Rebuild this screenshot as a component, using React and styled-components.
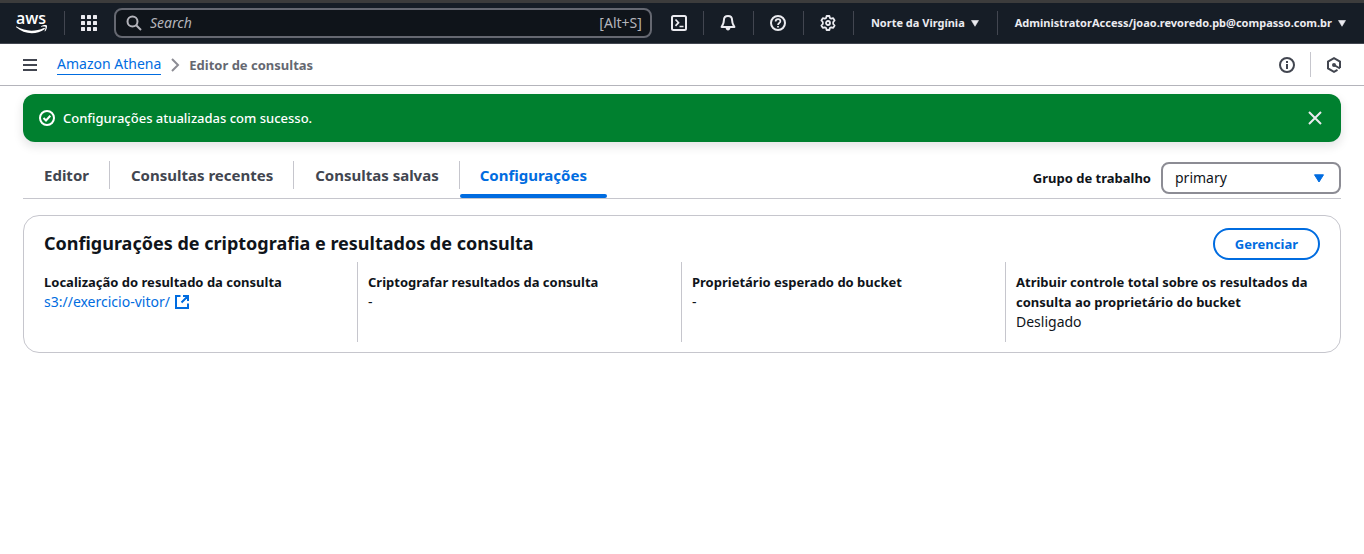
import React from 'react';
import styled, { createGlobalStyle, css } from 'styled-components';

const Global = createGlobalStyle`
  *, *::before, *::after { box-sizing: border-box; }
  body {
    margin: 0;
    background: #fff;
    color: #0f141a;
    font: 400 14px/20px "Noto Sans", "Open Sans", sans-serif;
  }
  button, input, select { font: inherit; color: inherit; margin: 0; }
  h2, dl, dd, dt, ul, ol { margin: 0; padding: 0; }
  ul, ol { list-style: none; }
`;

const IconButton = styled.button`
  display: inline-flex;
  align-items: center;
  justify-content: center;
  flex: none;
  padding: 0;
  border: 0;
  background: none;
  cursor: pointer;
`;

/* ---------- top navigation ---------- */

const TopNav = styled.header`
  display: flex;
  align-items: center;
  height: 44px;
  padding: 0 18px 0 16px;
  border-top: 3px solid #3c3c3c;
  border-bottom: 1px solid #424650;
  background: #161d26;
  color: #ebebf0;
`;

const LogoLink = styled.a`
  display: flex;
  flex: none;
  padding-right: 16px;
`;

const NavDivider = styled.span`
  flex: none;
  width: 1px;
  height: 24px;
  background: #424650;
`;

const NavIcon = styled(IconButton)`
  height: 32px;
  padding: ${(p) => (p.$wide ? '0 16px 0 19px' : '0 17px 0 16px')};
`;

const SearchBox = styled.label`
  display: flex;
  align-items: center;
  flex: 1;
  min-width: 120px;
  height: 30px;
  padding: 0 8px 0 10px;
  gap: 8px;
  border: 2px solid #656871;
  border-radius: 8px;
  background: #0f141a;
  color: #b4b4bb;
`;

const SearchInput = styled.input`
  flex: 1;
  min-width: 0;
  padding: 0;
  border: 0;
  outline: 0;
  background: none;
  &::placeholder {
    color: #b4b4bb;
    font-style: italic;
    opacity: 1;
  }
`;

const NavMenu = styled.button`
  display: flex;
  align-items: center;
  flex: none;
  gap: 6px;
  padding: 0 0 0 17px;
  border: 0;
  background: none;
  font-size: 11px;
  font-weight: 700;
  white-space: nowrap;
  cursor: pointer;
`;

const MenuDivider = styled(NavDivider)`
  margin-left: 18px;
`;

/* ---------- breadcrumb bar ---------- */

const BreadcrumbBar = styled.nav`
  display: flex;
  align-items: center;
  height: 42px;
  padding: 0 22px;
  border-bottom: 1px solid #b4b4bb;
  color: #424650;
`;

const Crumbs = styled.ol`
  display: flex;
  align-items: center;
  flex: 1;
  gap: 6px;
  margin-left: 19px;
`;

const Crumb = styled.li`
  display: flex;
  align-items: center;
  gap: 6px;
  color: #656871;
  ${(p) =>
    p.$current &&
    css`
      font-size: 13px;
      font-weight: 700;
    `}
`;

const CrumbLink = styled.a`
  border-bottom: 1px solid #006ce0;
  color: #006ce0;
  text-decoration: none;
`;

const BarDivider = styled.span`
  width: 1px;
  height: 25px;
  margin: 0 15px;
  background: #c6c6cd;
`;

/* ---------- page content ---------- */

const Content = styled.main`
  padding: 8px 23px;
`;

const Flash = styled.div`
  display: flex;
  align-items: center;
  height: 48px;
  padding: 0 18px 0 16px;
  gap: 8px;
  border-radius: 12px;
  background: #00802f;
  color: #fff;
  box-shadow: 0 4px 10px 1px rgba(0, 7, 22, 0.1);
`;

const FlashText = styled.span`
  flex: 1;
  font-size: 13px;
  font-weight: 500;
`;

const TabBar = styled.div`
  display: flex;
  justify-content: space-between;
  height: 57px;
  padding-top: 19px;
  border-bottom: 1px solid #c6c6cd;
`;

const TabList = styled.div`
  display: flex;
`;

const Tab = styled.button`
  display: flex;
  height: 37px;
  padding: 0;
  border: 0;
  background: none;
  color: ${(p) => (p.$active ? '#006ce0' : '#424650')};
  font-size: 15px;
  font-weight: 700;
  line-height: 28px;
  white-space: nowrap;
  cursor: pointer;
`;

const TabLabel = styled.span`
  display: block;
  height: 28px;
  padding: 0 20px 0 21px;
  border-right: 1px solid #c6c6cd;
  ${(p) =>
    p.$active &&
    css`
      height: 37px;
      padding: 0;
      border-right: 0;
      &::after {
        content: '';
        display: block;
        height: 4px;
        margin-top: 5px;
        border-radius: 2px;
        background: #006ce0;
      }
    `}
`;

const TabText = styled.span`
  display: block;
  padding: ${(p) => (p.$active ? '0 20px' : '0')};
`;

const WorkGroup = styled.div`
  display: flex;
  gap: 10px;
  height: 32px;
  margin-top: 1px;
  line-height: 32px;
`;

const FieldLabel = styled.label`
  font-size: 13px;
  font-weight: 700;
`;

const SelectWrap = styled.div`
  display: grid;
  align-items: center;
  width: 180px;
  & > * { grid-area: 1 / 1; }
  & > svg { justify-self: end; margin-right: 16px; pointer-events: none; }
`;

const Select = styled.select`
  width: 100%;
  height: 32px;
  padding: 0 32px 0 12px;
  border: 2px solid #8c8c94;
  border-radius: 8px;
  appearance: none;
  background: #fff;
  line-height: 20px;
`;

const Panel = styled.section`
  margin-top: 16px;
  padding: 12px 20px 10px;
  border: 1px solid #c6c6cd;
  border-radius: 16px;
`;

const PanelHeader = styled.div`
  display: flex;
  justify-content: space-between;
  height: 34px;
`;

const PanelTitle = styled.h2`
  font-size: 18px;
  font-weight: 700;
  line-height: 30px;
`;

const ActionButton = styled.button`
  height: 32px;
  padding: 0 20px;
  border: 2px solid #006ce0;
  border-radius: 16px;
  background: #fff;
  color: #006ce0;
  font-size: 13px;
  font-weight: 700;
  cursor: pointer;
`;

const Details = styled.dl`
  display: grid;
  grid-template-columns: repeat(4, 1fr);
  margin: 0 -10px;
`;

const Detail = styled.div`
  min-height: 80px;
  padding: 10px;
  & + & {
    box-shadow: -1px 0 #c6c6cd;
  }
`;

const Term = styled.dt`
  font-size: 13px;
  font-weight: 700;
`;

const Value = styled.dd`
  display: flex;
  align-items: center;
`;

const ExternalLink = styled.a`
  display: inline-flex;
  align-items: center;
  gap: 4px;
  color: #006ce0;
  text-decoration: none;
`;

/* ---------- drawings ---------- */

const Glyph = ({ size = 16, width = 2, children }) => (
  <svg width={size} height={size} viewBox="0 0 16 16" fill="none" stroke="currentColor" strokeWidth={width} aria-hidden="true">
    {children}
  </svg>
);

const AwsLogo = () => (
  <svg width="32" height="36" viewBox="0 0 32 36" fill="#fff" role="img" aria-label="aws">
    <text x="15" y="19" textAnchor="middle" fontFamily="Open Sans, sans-serif" fontSize="16" fontWeight="600">aws</text>
    <g transform="translate(0 7)">
      <path d="M0.6 14.6c8.8 5.2 18.8 5.2 27.2 1.4 1-.4 1.7.5.8 1.200-8.400 5.900-20.400 5.200-28.400-1.900-.5-.5-.1-1 .4-.7z" />
      <path d="M25 14.200c2-1.300 5.200-1.400 5.800-.8.5.6.1 4.200-1.700 5.900-.3.3-.6.1-.5-.2.500-1.300 1.300-3.800.9-4.300-.500-.500-3-.3-4.200-.1-.4 0-.5-.3-.3-.5z" />
    </g>
  </svg>
);

const Caret = () => (
  <svg width="8" height="7" viewBox="0 0 8 7" fill="currentColor" aria-hidden="true">
    <path d="M.5.500h7L4 6.300z" stroke="currentColor" strokeLinejoin="round" strokeWidth=".6" />
  </svg>
);

const AppsIcon = () => (
  <svg width="16" height="16" viewBox="0 0 16 16" fill="currentColor" aria-hidden="true">
    {[0, 6, 12].map((y) => [0, 6, 12].map((x) => <rect key={`${x}-${y}`} x={x} y={y} width="4" height="4" rx=".6" />))}
  </svg>
);

const SearchIcon = () => (
  <Glyph><circle cx="6.500" cy="6.500" r="5" /><path d="m10.200 10.200 4.800 4.800" /></Glyph>
);
const ShellIcon = () => (
  <Glyph><rect x="1" y="1" width="14" height="14" rx="1.500" /><path d="m4.500 4.500 3 3.200-3 3.200M8.500 11.500h4" strokeWidth="1.700" /></Glyph>
);
const BellIcon = () => (
  <Glyph>
    <path d="M8 1C5.300 1 3.900 3 3.900 5.200 3.900 8.500 2.900 9.700 1.600 12h12.800c-1.300-2.300-2.300-3.500-2.300-6.800C12.100 3 10.700 1 8 1z" strokeLinejoin="round" />
    <path d="M5.500 12.500c.3 2 1.200 2.900 2.500 2.900s2.200-.9 2.500-2.900z" fill="currentColor" stroke="none" />
  </Glyph>
);
const HelpIcon = () => (
  <Glyph><circle cx="8" cy="8" r="7" /><path d="M5.600 6.600C5.600 5 6.600 4.200 8 4.200s2.400.9 2.400 2.100C10.400 8 8 8 8 10M8 10.900v1.700" strokeWidth="1.700" /></Glyph>
);
const GearIcon = () => (
  <Glyph>
    <path d="M6.600 1h2.800l.5 2 1.300.7 2-.6 1.400 2.400L13.200 7v2l1.400 1.500-1.400 2.400-2-.6-1.300.7-.5 2H6.600l-.5-2-1.300-.7-2 .6-1.400-2.400L2.800 9V7L1.400 5.500l1.400-2.400 2 .6L6.100 3z" strokeLinejoin="round" strokeWidth="1.800" />
    <circle cx="8" cy="8" r="2" strokeWidth="1.800" />
  </Glyph>
);
const MenuIcon = () => (
  <Glyph><path d="M1 3h14M1 8h14M1 13h14" /></Glyph>
);
const ChevronIcon = () => (
  <Glyph><path d="m5 2 6 6-6 6" stroke="#8c8c94" /></Glyph>
);
const InfoIcon = () => (
  <Glyph><circle cx="8" cy="8" r="7" /><path d="M8 4v2M8 7v5" /></Glyph>
);
const HexIcon = () => (
  <Glyph>
    <path d="M14 11V4.500L8 1.200 2 4.500v7l6 3.300 3.500-2" />
    <circle cx="8" cy="8" r="2" fill="currentColor" stroke="none" />
    <path d="m8 8 6 3.500" />
  </Glyph>
);
const SuccessIcon = () => (
  <Glyph><circle cx="8" cy="8" r="7" /><path d="m4.500 8 2.500 2.500 4.300-4.700" /></Glyph>
);
const CloseIcon = () => (
  <Glyph><path d="m2 2 12 12M14 2 2 14" stroke="#ebebf0" /></Glyph>
);
const ExternalIcon = () => (
  <Glyph><path d="M6.500 2H2v12h12V9.500M9 2h5v5M14 2 7.500 8.500" /></Glyph>
);

/* ---------- page ---------- */

const TABS = ['Editor', 'Consultas recentes', 'Consultas salvas', 'Configurações'];

export default function App() {
  return (
    <>
      <Global />
      <TopNav>
        <LogoLink href="#"><AwsLogo /></LogoLink>
        <NavDivider />
        <NavIcon aria-label="Serviços"><AppsIcon /></NavIcon>
        <SearchBox>
          <SearchIcon />
          <SearchInput type="text" placeholder="Search" aria-label="Search" />
          <span>[Alt+S]</span>
        </SearchBox>
        <NavIcon $wide aria-label="CloudShell"><ShellIcon /></NavIcon>
        <NavDivider />
        <NavIcon aria-label="Notificações"><BellIcon /></NavIcon>
        <NavDivider />
        <NavIcon aria-label="Ajuda"><HelpIcon /></NavIcon>
        <NavDivider />
        <NavIcon aria-label="Preferências"><GearIcon /></NavIcon>
        <NavDivider />
        <NavMenu>Norte da Virgínia <Caret /></NavMenu>
        <MenuDivider />
        <NavMenu>AdministratorAccess/joao.revoredo.pb@compasso.com.br <Caret /></NavMenu>
      </TopNav>
      <BreadcrumbBar>
        <IconButton aria-label="Menu"><MenuIcon /></IconButton>
        <Crumbs>
          <Crumb><CrumbLink href="#">Amazon Athena</CrumbLink><ChevronIcon /></Crumb>
          <Crumb $current>Editor de consultas</Crumb>
        </Crumbs>
        <IconButton aria-label="Informações"><InfoIcon /></IconButton>
        <BarDivider />
        <IconButton aria-label="Amazon Q"><HexIcon /></IconButton>
      </BreadcrumbBar>
      <Content>
        <Flash role="status">
          <SuccessIcon />
          <FlashText>Configurações atualizadas com sucesso.</FlashText>
          <IconButton aria-label="Fechar"><CloseIcon /></IconButton>
        </Flash>
        <TabBar>
          <TabList role="tablist">
            {TABS.map((name, i) => (
              <Tab key={name} role="tab" aria-selected={i === 3} $active={i === 3}>
                <TabLabel $active={i === 3}><TabText $active={i === 3}>{name}</TabText></TabLabel>
              </Tab>
            ))}
          </TabList>
          <WorkGroup>
            <FieldLabel htmlFor="workgroup">Grupo de trabalho</FieldLabel>
            <SelectWrap>
              <Select id="workgroup" defaultValue="primary"><option>primary</option></Select>
              <svg width="12" height="9" viewBox="0 0 12 9" fill="#006ce0" aria-hidden="true">
                <path d="M1.500.800h9L6 8z" stroke="#006ce0" strokeLinejoin="round" />
              </svg>
            </SelectWrap>
          </WorkGroup>
        </TabBar>
        <Panel>
          <PanelHeader>
            <PanelTitle>Configurações de criptografia e resultados de consulta</PanelTitle>
            <ActionButton>Gerenciar</ActionButton>
          </PanelHeader>
          <Details>
            <Detail>
              <Term>Localização do resultado da consulta</Term>
              <Value><ExternalLink href="#">s3://exercicio-vitor/ <ExternalIcon /></ExternalLink></Value>
            </Detail>
            <Detail>
              <Term>Criptografar resultados da consulta</Term>
              <Value>-</Value>
            </Detail>
            <Detail>
              <Term>Proprietário esperado do bucket</Term>
              <Value>-</Value>
            </Detail>
            <Detail>
              <Term>Atribuir controle total sobre os resultados da consulta ao proprietário do bucket</Term>
              <Value>Desligado</Value>
            </Detail>
          </Details>
        </Panel>
      </Content>
    </>
  );
}
